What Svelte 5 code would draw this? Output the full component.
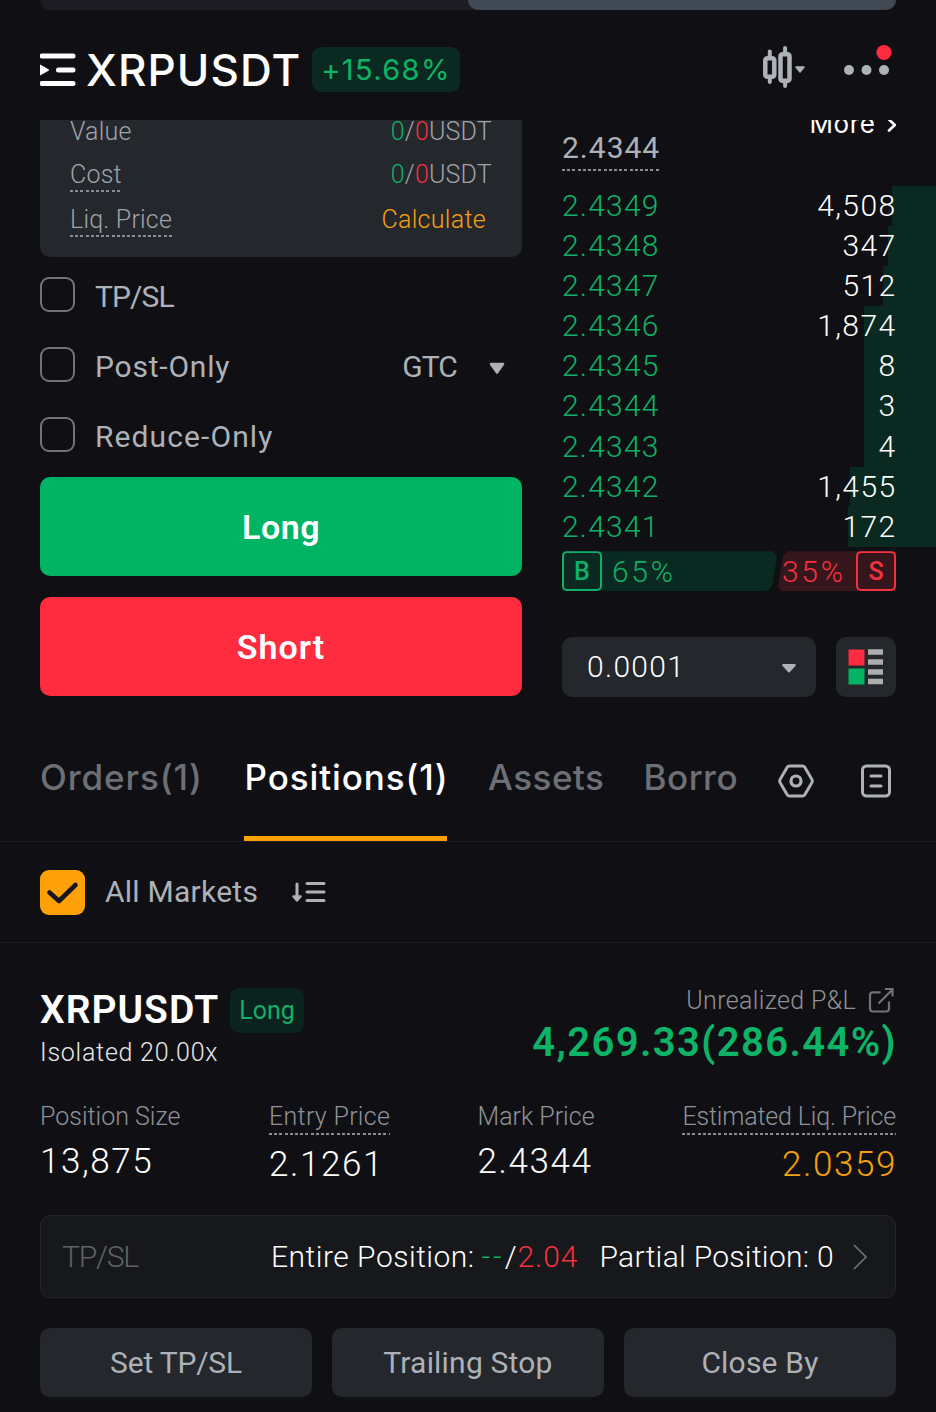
<script lang="ts">
  type Bid = { price: string; size: string; depth: number };

  const bids: Bid[] = [
    { price: "2.4349", size: "4,508", depth: 44.5 },
    { price: "2.4348", size: "347", depth: 48 },
    { price: "2.4347", size: "512", depth: 53 },
    { price: "2.4346", size: "1,874", depth: 72 },
    { price: "2.4345", size: "8", depth: 72 },
    { price: "2.4344", size: "3", depth: 72 },
    { price: "2.4343", size: "4", depth: 72 },
    { price: "2.4342", size: "1,455", depth: 86 },
    { price: "2.4341", size: "172", depth: 88 },
  ];

  const actions = ["Set TP/SL", "Trailing Stop", "Close By"];

  let tpsl = $state(false);
  let postOnly = $state(false);
  let reduceOnly = $state(false);
  let allMarkets = $state(true);
</script>

<div class="page">
  <div class="segment"><span></span></div>

  <header>
    <svg class="menu" width="36" height="34" viewBox="0 0 36 34">
      <path d="M2 3H33M18.500 17H33M2 30.500H33" stroke="#fff" stroke-width="5" stroke-linecap="round" />
      <path d="M0 11.500L8.500 16.200Q9.700 17 8.500 17.800L0 22.500Z" fill="#fff" />
    </svg>
    <h1>XRPUSDT</h1>
    <span class="change">+15.68%</span>
    <svg class="candles" width="44" height="44" viewBox="0 0 44 44">
      <g fill="none" stroke="#adb1b8" stroke-width="4.500">
        <rect x="3.300" y="12.300" width="9" height="18.500" rx="2" />
        <rect x="18.500" y="8.300" width="9" height="26.500" rx="2" />
        <path d="M7.800 5.500V11M7.800 32V36M23.100 2V7M23.100 36V40" stroke-linecap="round" stroke-width="4" />
      </g>
      <path d="M34 21H42L38 26Z" fill="#adb1b8" stroke="#adb1b8" stroke-width="1.500" stroke-linejoin="round" />
    </svg>
    <svg class="more" width="50" height="44" viewBox="0 0 50 44">
      <g fill="#adb1b8">
        <circle cx="6" cy="26" r="5" />
        <circle cx="23.500" cy="26" r="5" />
        <circle cx="41" cy="26" r="5" />
      </g>
      <circle cx="41" cy="8.500" r="7.600" fill="#ff2b3f" />
    </svg>
  </header>

  <main>
    <section class="order">
      <div class="summary">
        <div class="line">
          <span class="value">Value</span>
          <span class="usdt"><i class="up">0</i>/<i class="down">0</i>USDT</span>
        </div>
        <div class="line cost">
          <span class="dotted">Cost</span>
          <span class="usdt"><i class="up">0</i>/<i class="down">0</i>USDT</span>
        </div>
        <div class="line liq">
          <span class="dotted">Liq. Price</span>
          <span class="calc">Calculate</span>
        </div>
      </div>

      <label class="option"><input type="checkbox" bind:checked={tpsl} /><span class="tight">TP/SL</span></label>
      <div class="option">
        <label><input type="checkbox" bind:checked={postOnly} /><span>Post-Only</span></label>
        <span class="gtc tight">GTC</span>
        <svg class="caret" width="16" height="13" viewBox="0 0 16 13">
          <path d="M2 2H14L8 10.500Z" fill="#adb1b8" stroke="#adb1b8" stroke-width="2.500" stroke-linejoin="round" />
        </svg>
      </div>
      <label class="option reduce"><input type="checkbox" bind:checked={reduceOnly} /><span>Reduce-Only</span></label>

      <button class="trade long">Long</button>
      <button class="trade short">Short</button>
    </section>

    <section class="book">
      <div class="funding">
        More
        <svg width="10" height="16" viewBox="0 0 10 16">
          <path d="M2 2.500L7.800 8L2 13.500" fill="none" stroke="#fff" stroke-width="2.600" stroke-linecap="round" stroke-linejoin="round" />
        </svg>
      </div>
      <div class="mark"><span class="dotted">2.4344</span></div>
      <div class="bids">
        {#each bids as bid}
          <div class="bid">
            <span class="depth" style="width: {bid.depth}px"></span>
            <span class="price">{bid.price}</span>
            <span class="size">{bid.size}</span>
          </div>
        {/each}
      </div>
      <div class="ratio">
        <div class="buy"><b>B</b><span>65%</span></div>
        <div class="sell"><span>35%</span><b>S</b></div>
      </div>
      <div class="tools">
        <button class="step">
          0.0001
          <svg width="16" height="11" viewBox="0 0 16 11">
            <path d="M2.200 2H13.800L8 8.500Z" fill="#adb1b8" stroke="#adb1b8" stroke-width="2" stroke-linejoin="round" />
          </svg>
        </button>
        <button class="layout" aria-label="Order book layout">
          <svg width="36" height="36" viewBox="0 0 36 36">
            <rect x="0.500" y="0.500" width="16" height="16" fill="#ff2b3f" />
            <rect x="0.500" y="19.500" width="16" height="16" fill="#00b464" />
            <path d="M20 3H35M20 13H35M20 23H35M20 32.500H35" stroke="#adadae" stroke-width="5.400" />
          </svg>
        </button>
      </div>
    </section>
  </main>

  <nav>
    <span class="tab orders">Orders(1)</span>
    <span class="tab positions active">Positions(1)</span>
    <span class="tab assets">Assets</span>
    <span class="tab borrow">Borro</span>
    <svg class="hex" width="38" height="36" viewBox="0 0 38 36">
      <g fill="none" stroke="#adb1b8" stroke-width="3">
        <path d="M12.500 3H25.500Q27 3 27.800 4.300L35 16.600Q35.700 18 35 19.400L27.800 31.700Q27 33 25.500 33H12.500Q11 33 10.200 31.700L3 19.400Q2.300 18 3 16.600L10.200 4.300Q11 3 12.500 3Z" />
        <circle cx="19" cy="18" r="5" stroke-width="3.200" />
      </g>
    </svg>
    <svg width="32" height="36" viewBox="0 0 32 36">
      <g fill="none" stroke="#adb1b8" stroke-width="3" stroke-linecap="round">
        <rect x="2.500" y="3" width="27" height="30" rx="4" />
        <path d="M11 13H21M11 23H21" />
      </g>
    </svg>
  </nav>

  <div class="filter">
    <label>
      <input type="checkbox" class="all" bind:checked={allMarkets} />
      {#if allMarkets}
        <svg class="tick" width="45" height="45" viewBox="0 0 45 45">
          <path d="M9.500 22.500L19 31L35.500 15" fill="none" stroke="#17181e" stroke-width="4.600" stroke-linecap="round" stroke-linejoin="round" />
        </svg>
      {/if}
      <span>All Markets</span>
    </label>
    <svg width="36" height="24" viewBox="0 0 36 24">
      <g stroke="#adb1b8" stroke-width="3" stroke-linecap="round">
        <path d="M16 3.500H33M16 12H33M16 20.500H33" />
        <path d="M6 4V18" />
      </g>
      <path d="M2.500 16.500H9.500L6 20.500Z" fill="#adb1b8" stroke="#adb1b8" stroke-width="2.500" stroke-linejoin="round" />
    </svg>
  </div>

  <article>
    <div class="head">
      <div>
        <div class="symbol"><h2>XRPUSDT</h2><span class="side">Long</span></div>
        <p class="mode">Isolated 20.00x</p>
      </div>
      <div class="pnl">
        <div class="pnl-label">
          Unrealized P&amp;L
          <svg width="27" height="27" viewBox="0 0 27 27">
            <path d="M12.500 5.300H5Q2 5.300 2 8.300V21.500Q2 24.500 5 24.500H18Q21 24.500 21 21.500V14.500M10.500 16.500L24 3M17 2H24.500V9.500" fill="none" stroke="#717376" stroke-width="2.200" />
          </svg>
        </div>
        <strong>4,269.33(286.44%)</strong>
      </div>
    </div>

    <dl>
      <div class="s1"><dt>Position Size</dt><dd>13,875</dd></div>
      <div class="s2"><dt class="dotted">Entry Price</dt><dd class="low">2.1261</dd></div>
      <div class="s3"><dt>Mark Price</dt><dd>2.4344</dd></div>
      <div class="s4"><dt class="dotted">Estimated Liq. Price</dt><dd class="low warn">2.0359</dd></div>
    </dl>

    <div class="stops">
      <span class="stops-name">TP/SL</span>
      <span class="entire">Entire Position:</span>
      <span class="prices"><i class="up dash">--</i>/<i class="down">2.04</i></span>
      <span class="partial">Partial Position: 0</span>
      <svg width="16" height="28" viewBox="0 0 16 28">
        <path d="M2 2L14 14L2 26" fill="none" stroke="#6f7277" stroke-width="1.600" />
      </svg>
    </div>

    <div class="actions">
      {#each actions as action}
        <button>{action}</button>
      {/each}
    </div>
  </article>
</div>

<style>
  :global(body) {
    background: #101014;
  }

  .page {
    width: 936px;
    height: 1412px;
    overflow: hidden;
    background: #101014;
    color: #fff;
    font-family: Roboto, "Liberation Sans", sans-serif;
    font-size: 30px;
    line-height: 40px;
  }

  h1,
  h2,
  p,
  dl,
  dd {
    margin: 0;
  }

  i {
    font-style: normal;
  }

  svg {
    flex: none;
  }

  button {
    border: 0;
    padding: 0;
    color: inherit;
    font: inherit;
  }

  .up {
    color: #10b068;
  }

  .down {
    color: #f5303f;
  }

  .dotted {
    background: repeating-linear-gradient(90deg, #8b8e94 0 3px, transparent 3px 5.200px) left bottom / 100% 2px no-repeat;
  }

  .segment {
    display: flex;
    justify-content: flex-end;
    height: 10px;
    margin: 0 40px;
    border-radius: 0 0 10px 10px;
    background: #1d1c22;
  }

  .segment span {
    width: 428px;
    border-radius: 0 0 10px 10px;
    background: #404853;
  }

  header {
    display: flex;
    align-items: center;
    box-sizing: border-box;
    height: 110px;
    padding: 20px 45px 10px 40px;
    font-family: Inter, sans-serif;
  }

  h1 {
    width: 225px;
    padding-left: 10px;
    font-size: 44px;
    font-weight: 500;
    letter-spacing: 1.100px;
  }

  .change {
    width: 148px;
    height: 45px;
    margin: -1px 0 0 1px;
    border-radius: 9px;
    background: #0a2a21;
    color: #0db467;
    font-size: 29px;
    line-height: 45px;
    text-align: center;
    letter-spacing: 1.400px;
  }

  .candles {
    margin: 0 37px 5px auto;
  }

  .more {
    margin: 0 -2px 8px 0;
  }

  main {
    display: flex;
    gap: 40px;
    height: 602px;
    padding-left: 40px;
  }

  .order {
    width: 482px;
  }

  .summary {
    box-sizing: border-box;
    height: 137px;
    margin-bottom: 2px;
    padding: 0 30px;
    border-radius: 0 0 10px 10px;
    background: #24272c;
    color: #a0a3a9;
    font-size: 25px;
    font-weight: 300;
    letter-spacing: 0.200px;
  }

  .line {
    display: flex;
    justify-content: space-between;
    height: 42px;
    line-height: 23px;
  }

  .line .dotted {
    height: 30px;
  }

  .cost,
  .liq {
    height: 45px;
    line-height: 25px;
  }

  .calc {
    margin-right: 6px;
    color: #f7a00c;
    letter-spacing: 0.300px;
  }

  .option {
    display: flex;
    align-items: center;
    height: 70px;
    color: #adb1b8;
    letter-spacing: 0.800px;
  }

  .reduce {
    letter-spacing: 1.100px;
  }

  .option label {
    display: flex;
    align-items: center;
  }

  input {
    flex: none;
    box-sizing: border-box;
    width: 35px;
    height: 35px;
    margin: 0 20px 0 0;
    border: 2px solid #717378;
    border-radius: 9px;
    appearance: none;
  }

  .option span {
    padding-top: 6px;
  }

  .option .tight {
    letter-spacing: -0.900px;
  }

  .gtc {
    margin-left: auto;
  }

  .caret {
    margin: 8px 17px 0 32px;
  }

  .trade {
    display: block;
    width: 100%;
    height: 99.500px;
    margin: 7.500px 0 20.500px;
    padding-top: 2px;
    border-radius: 10px;
    background: #00b464;
    font-size: 34px;
    font-weight: 600;
    letter-spacing: 0.500px;
  }

  .short {
    margin: 0;
    background: #ff2b3f;
    letter-spacing: 1px;
  }

  .book {
    flex: 1;
  }

  .funding {
    display: flex;
    justify-content: flex-end;
    gap: 11px;
    height: 20px;
    padding-right: 39.500px;
    overflow: hidden;
    font-family: Inter, sans-serif;
    font-size: 26px;
    line-height: 7px;
    letter-spacing: 0.600px;
  }

  .funding svg {
    margin-top: -3px;
  }

  .mark {
    height: 46px;
    color: #adb1b8;
    letter-spacing: 1px;
    line-height: 16px;
  }

  .mark .dotted {
    display: inline-block;
    height: 31px;
  }

  .bid {
    position: relative;
    display: flex;
    justify-content: space-between;
    height: 40.100px;
    padding-right: 39.500px;
    font-weight: 300;
  }

  .depth {
    position: absolute;
    top: 0;
    right: 0;
    height: 100%;
    background: #0a2a21;
  }

  .price,
  .size {
    position: relative;
    letter-spacing: 1.200px;
  }

  .size {
    letter-spacing: 1.400px;
  }

  .price {
    color: #10b068;
  }

  .ratio {
    display: flex;
    gap: 3px;
    height: 40px;
    margin: 4.500px 40px 45.500px 0;
    line-height: 41px;
    font-weight: 300;
    letter-spacing: 2.700px;
  }

  .ratio div {
    display: flex;
    justify-content: space-between;
  }

  .ratio b {
    box-sizing: border-box;
    width: 40px;
    height: 40px;
    border: 2px solid;
    border-radius: 5px;
    font-size: 25px;
    font-weight: 500;
    line-height: 37px;
    text-align: center;
    letter-spacing: 0;
  }

  .ratio .buy {
    justify-content: flex-start;
    gap: 10px;
    width: 215px;
    background: #0a2a21;
    color: #10b068;
    clip-path: polygon(0 0, 211px 0, 215px 5px, 210px 35px, 205px 100%, 0 100%);
  }

  .ratio .sell {
    flex: 1;
    margin-left: -2px;
    background: #35161c;
    color: #f5303f;
    padding-left: 4px;
    clip-path: polygon(9px 0, 100% 0, 100% 100%, 3px 100%, 0 35px, 5px 5px);
  }

  .tools {
    display: flex;
    gap: 20px;
  }

  .step,
  .layout {
    display: flex;
    align-items: center;
    justify-content: center;
    box-sizing: border-box;
    width: 60px;
    height: 60px;
    border-radius: 10px;
    background: #24272c;
  }

  .step {
    justify-content: space-between;
    width: 254px;
    padding: 0 19px 0 25px;
    font-weight: 300;
    letter-spacing: 1.300px;
  }

  .step svg {
    margin-top: 4px;
  }

  nav {
    display: flex;
    align-items: center;
    box-sizing: border-box;
    height: 120px;
    padding: 0 44px 0 40px;
    border-bottom: 1px solid #1e1f23;
    font-family: Inter, sans-serif;
    font-size: 35px;
    font-weight: 500;
    color: #6c7076;
  }

  .tab {
    box-sizing: border-box;
    height: 119px;
    line-height: 111px;
    letter-spacing: 0.900px;
  }

  .orders {
    width: 203.500px;
  }

  .positions {
    width: 203.500px;
    padding-left: 1px;
    border-bottom: 5px solid #ffa20a;
    color: #fff;
  }

  .assets {
    width: 155.500px;
    margin-left: 41px;
    letter-spacing: 0.500px;
  }

  .borrow {
    flex: 1;
    letter-spacing: 0.500px;
  }

  nav svg {
    margin-top: -1px;
  }

  .hex {
    margin-right: 45px;
  }

  .filter {
    display: flex;
    align-items: center;
    box-sizing: border-box;
    height: 101px;
    padding: 0 40px;
    border-bottom: 1.500px solid #1e1f23;
    color: #adb1b8;
    letter-spacing: 0.250px;
  }

  .filter label {
    position: relative;
    display: flex;
    align-items: center;
    width: 251px;
  }

  .filter .all {
    width: 45px;
    height: 45px;
    border-color: #717378;
  }

  .filter .all:checked {
    border: 0;
    background: #ffa20a;
  }

  .tick {
    position: absolute;
    left: 0;
    top: 0;
  }

  article {
    padding: 44.500px 40px 0;
    font-weight: 300;
  }

  .head {
    display: flex;
    justify-content: space-between;
    height: 109.500px;
  }

  .symbol {
    display: flex;
    height: 45px;
    line-height: 45px;
  }

  h2 {
    width: 190px;
    font-size: 39px;
    font-weight: 600;
    letter-spacing: 1px;
  }

  .side {
    width: 74px;
    border-radius: 9px;
    background: #0b231e;
    color: #10b068;
    font-size: 25px;
    font-weight: 400;
    text-align: center;
  }

  .mode {
    font-size: 25px;
    color: #e8e8ea;
    letter-spacing: 0.750px;
  }

  .pnl {
    text-align: right;
  }

  .pnl-label {
    display: flex;
    align-items: center;
    justify-content: flex-end;
    gap: 12px;
    height: 26px;
    margin-right: 1px;
    color: #8f9298;
    font-size: 25px;
    letter-spacing: 0.350px;
  }

  .pnl strong {
    display: block;
    margin: 9px -1px 0 0;
    color: #0db467;
    font-size: 40px;
    font-weight: 600;
    letter-spacing: 1.400px;
  }

  dl {
    display: flex;
    height: 118px;
  }

  dt {
    width: max-content;
    height: 38px;
    color: #8f9298;
    font-size: 25px;
    line-height: 39px;
  }

  dd {
    padding-top: 7px;
    font-size: 35px;
    letter-spacing: 1.600px;
  }

  .low {
    padding-top: 10px;
  }

  .warn {
    margin-right: -1px;
    color: #f7a00c;
  }

  .s1 {
    width: 229px;
  }

  .s2 {
    width: 208.500px;
  }

  .s2 dt {
    letter-spacing: 0.300px;
  }

  .s4 {
    margin-left: auto;
    text-align: right;
  }

  .s4 dt {
    letter-spacing: -0.180px;
  }

  .stops {
    display: flex;
    align-items: center;
    box-sizing: border-box;
    height: 83px;
    margin-bottom: 29.500px;
    padding: 0 27px 0 21px;
    border: 1.500px solid #232529;
    border-radius: 10px;
    background: #17181b;
    line-height: 38px;
  }

  .stops-name {
    width: 209px;
    color: #5f6266;
    letter-spacing: -1.200px;
  }

  .entire {
    width: 210.500px;
    letter-spacing: 0.500px;
  }

  .prices {
    width: 118px;
    letter-spacing: 0.900px;
  }

  .dash {
    letter-spacing: 3px;
  }

  .partial {
    flex: 1;
    letter-spacing: 0.300px;
  }

  .actions {
    display: flex;
    gap: 20px;
  }

  .actions button {
    flex: 1;
    height: 69.500px;
    padding-top: 2px;
    border-radius: 10px;
    background: #24272c;
    color: #adb1b8;
    font-weight: 400;
    letter-spacing: 0.200px;
  }

  .actions button:first-child {
    letter-spacing: -0.200px;
  }
</style>
